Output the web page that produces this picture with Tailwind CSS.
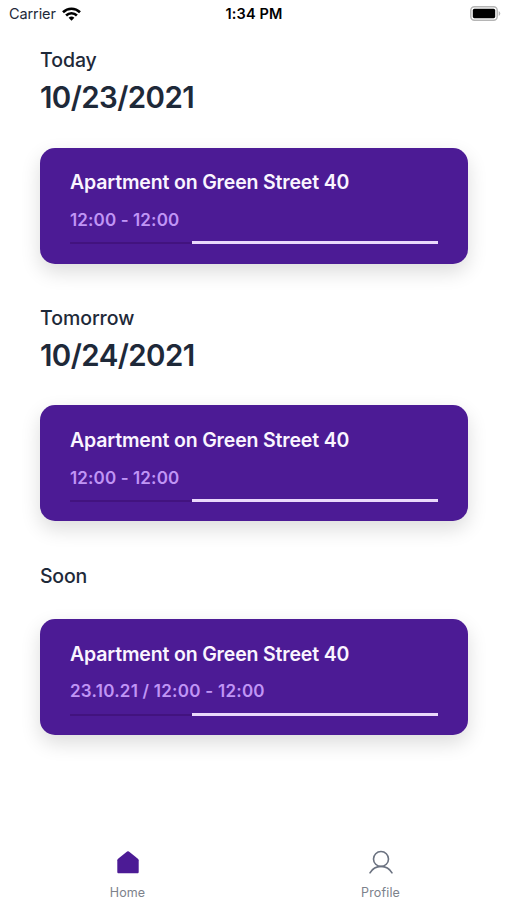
<!DOCTYPE html>
<html lang="en">
<head>
    <meta charset="UTF-8">
    <meta name="viewport" content="width=device-width, initial-scale=1.0">
    <title>Home</title>
    <script src="https://cdn.jsdelivr.net/npm/@tailwindcss/browser@4"></script>
</head>
<body class="bg-white font-['Inter',sans-serif] text-gray-800">
    <div class="flex flex-col h-[900px] w-[507px] overflow-hidden">
        <!-- Status bar -->
        <header class="grid grid-cols-3 items-center h-[27px] pl-[9px] pr-[6px] text-black">
            <div class="flex items-center gap-[6px]">
                <span class="text-[14.5px] tracking-[-0.1px] text-gray-800">Carrier</span>
                <svg class="w-[19px] h-[14px]" viewBox="0 0 19 14" fill="none" stroke="currentColor" stroke-width="2.6">
                    <path d="M1 5.2a12.2 12.2 0 0 1 17 0"/>
                    <path d="M4.1 8.5a7.7 7.7 0 0 1 10.8 0"/>
                    <path d="M9.5 13.8 6.6 10.8a4.2 4.2 0 0 1 5.8 0Z" fill="currentColor" stroke="none"/>
                </svg>
            </div>
            <div class="pt-px pr-[2px] text-center text-[14.5px] tracking-[0.15px] font-semibold whitespace-nowrap">1:34 PM</div>
            <svg class="justify-self-end w-[31px] h-[15px]" viewBox="0 0 31 15">
                <rect x="0.8" y="0.8" width="26.4" height="13.4" rx="3.6" fill="#fff" stroke="#b5b5b5" stroke-width="1.5"/>
                <rect x="2.8" y="2.8" width="22.4" height="9.4" rx="1.6"/>
                <path d="M28.7 5v5a2.8 2.8 0 0 0 0-5Z" fill="#b5b5b5"/>
            </svg>
        </header>

        <main class="flex-1 px-10 pt-5">
            <section class="h-[258px]">
                <h2 class="text-[19.5px] leading-[26px] tracking-[-0.05px] font-medium">Today</h2>
                <p class="mt-1 text-[29.5px] leading-[40px] tracking-[-0.6px] font-semibold">10/23/2021</p>
                <div class="mt-[31px] h-[116px] w-[428px] rounded-[15px] bg-[#4c1b95] px-[30px] pt-[21px] shadow-[0_8px_20px_rgba(0,0,0,0.14)]">
                    <h3 class="text-[19.5px] leading-[26px] tracking-[-0.16px] font-semibold text-purple-50">Apartment on Green Street 40</h3>
                    <p class="mt-[14px] text-[17px] leading-[22px] tracking-[0.12px] font-semibold text-[#c095f5]">12:00 - 12:00</p>
                    <div class="mt-[10px] flex items-center">
                        <div class="h-[2px] w-[122px] bg-[#42137f]"></div>
                        <div class="h-[3px] w-[247px] bg-[#ead9fb]"></div>
                    </div>
                </div>
            </section>

            <section class="h-[258px]">
                <h2 class="text-[19.5px] leading-[26px] tracking-[-0.05px] font-medium">Tomorrow</h2>
                <p class="mt-1 text-[29.5px] leading-[40px] tracking-[-0.6px] font-semibold">10/24/2021</p>
                <div class="mt-[30px] h-[116px] w-[428px] rounded-[15px] bg-[#4c1b95] px-[30px] pt-[22px] shadow-[0_8px_20px_rgba(0,0,0,0.14)]">
                    <h3 class="text-[19.5px] leading-[26px] tracking-[-0.16px] font-semibold text-purple-50">Apartment on Green Street 40</h3>
                    <p class="mt-[14px] text-[17px] leading-[22px] tracking-[0.12px] font-semibold text-[#c095f5]">12:00 - 12:00</p>
                    <div class="mt-[10px] flex items-center">
                        <div class="h-[2px] w-[122px] bg-[#42137f]"></div>
                        <div class="h-[3px] w-[247px] bg-[#ead9fb]"></div>
                    </div>
                </div>
            </section>

            <section>
                <h2 class="text-[19.5px] leading-[26px] tracking-[-0.25px] font-medium">Soon</h2>
                <div class="mt-[30px] h-[116px] w-[428px] rounded-[15px] bg-[#4c1b95] px-[30px] pt-[22px] shadow-[0_8px_20px_rgba(0,0,0,0.14)]">
                    <h3 class="text-[19.5px] leading-[26px] tracking-[-0.16px] font-semibold text-purple-50">Apartment on Green Street 40</h3>
                    <p class="mt-[13px] text-[17px] leading-[22px] tracking-[0.25px] font-semibold text-[#c095f5]">23.10.21 / 12:00 - 12:00</p>
                    <div class="mt-[11px] flex items-center">
                        <div class="h-[2px] w-[122px] bg-[#42137f]"></div>
                        <div class="h-[3px] w-[247px] bg-[#ead9fb]"></div>
                    </div>
                </div>
            </section>
        </main>

        <!-- Tab bar -->
        <nav class="grid grid-cols-2 h-[52px] pl-px text-[12.5px] leading-4 tracking-[0.15px] text-[#7d828c]">
            <a class="flex flex-col items-center gap-[9px] pt-[2px]">
                <svg class="w-6 h-[26px]" viewBox="0 0 24 26" fill="#4c1b95">
                    <path d="M11.1 1.6a1.5 1.5 0 0 1 1.8 0l9 7.100c.5.4.8.9.8 1.500v11.800c0 .8-.5 1.300-1.300 1.300H2.600c-.8 0-1.300-.5-1.300-1.300V10.200c0-.6.3-1.100.8-1.500Z"/>
                </svg>
                <span>Home</span>
            </a>
            <a class="flex flex-col items-center gap-[9px] pt-[2px]">
                <svg class="w-6 h-[26px]" viewBox="0 0 24 26" fill="none" stroke="#6b7280" stroke-width="1.6" stroke-linecap="round">
                    <circle cx="12" cy="9" r="7.5"/>
                    <path d="M1 22.8c2.4-4 6.5-6.4 11-6.4s8.6 2.400 11 6.400"/>
                </svg>
                <span>Profile</span>
            </a>
        </nav>
    </div>
</body>
</html>
